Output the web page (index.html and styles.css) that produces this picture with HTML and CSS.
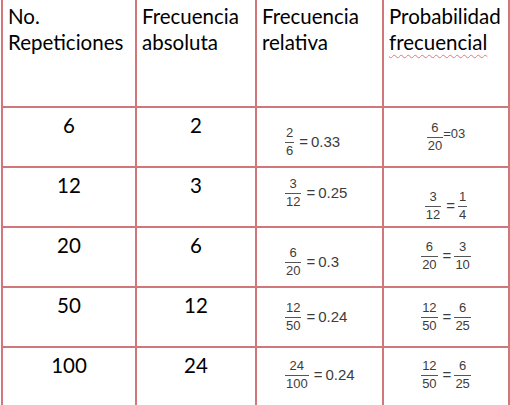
FILE: index.html
```html
<!DOCTYPE html>
<html lang="es">
<head>
    <meta charset="UTF-8" />
    <title>Frecuencias</title>
    <link rel="stylesheet" href="styles.css">
</head>
<body>
<table class="freq">
    <colgroup>
        <col class="c1"><col class="c2"><col class="c3"><col class="c4">
    </colgroup>
    <thead>
        <tr>
            <th>No.<br>Repeticiones</th>
            <th>Frecuencia<br>absoluta</th>
            <th>Frecuencia<br>relativa</th>
            <th>Probabilidad<br><span class="spell">frecuencial</span></th>
        </tr>
    </thead>
    <tbody>
        <tr>
            <td class="num">6</td>
            <td class="num">2</td>
            <td class="rel pt18"><div class="eq"><span class="frac"><span>2</span><span>6</span></span><span class="op">=</span><span>0.33</span></div></td>
            <td class="prob pt13"><div class="eq"><span class="frac"><span>6</span><span>20</span></span><span class="raised">=03</span></div></td>
        </tr>
        <tr>
            <td class="num">12</td>
            <td class="num">3</td>
            <td class="rel pt9"><div class="eq"><span class="frac"><span>3</span><span>12</span></span><span class="op">=</span><span>0.25</span></div></td>
            <td class="prob pt22"><div class="eq"><span class="frac"><span>3</span><span>12</span></span><span class="op">=</span><span class="frac"><span>1</span><span>4</span></span></div></td>
        </tr>
        <tr>
            <td class="num">20</td>
            <td class="num">6</td>
            <td class="rel pt18"><div class="eq"><span class="frac"><span>6</span><span>20</span></span><span class="op">=</span><span>0.3</span></div></td>
            <td class="prob pt12"><div class="eq"><span class="frac"><span>6</span><span>20</span></span><span class="op">=</span><span class="frac"><span>3</span><span>10</span></span></div></td>
        </tr>
        <tr>
            <td class="num">50</td>
            <td class="num">12</td>
            <td class="rel pt13"><div class="eq"><span class="frac"><span>12</span><span>50</span></span><span class="op">=</span><span>0.24</span></div></td>
            <td class="prob pt13"><div class="eq"><span class="frac"><span>12</span><span>50</span></span><span class="op">=</span><span class="frac"><span>6</span><span>25</span></span></div></td>
        </tr>
        <tr>
            <td class="num">100</td>
            <td class="num">24</td>
            <td class="rel pt11"><div class="eq"><span class="frac"><span>24</span><span>100</span></span><span class="op">=</span><span>0.24</span></div></td>
            <td class="prob pt11"><div class="eq"><span class="frac"><span>12</span><span>50</span></span><span class="op">=</span><span class="frac"><span>6</span><span>25</span></span></div></td>
        </tr>
    </tbody>
</table>
</body>
</html>
```

FILE: styles.css
```css
body {
    margin: 0;
    background-color: #fff;
    font-family: Lato, "Liberation Sans", sans-serif;
    color: #000;
    overflow: hidden;
}
.freq {
    border-collapse: collapse;
    table-layout: fixed;
    width: 509px;
    margin-left: 1px;
}
.c1 { width: 134px; }
.c2 { width: 120px; }
.c3 { width: 127px; }
.c4 { width: 126px; }
.freq th, .freq td {
    border: 2px solid #d27779;
    vertical-align: top;
    padding: 0;
    box-sizing: border-box;
}
.freq th {
    border-top: none;
    height: 107px;
    padding: 3px 0 0 5px;
    text-align: left;
    font-weight: 400;
    font-size: 20.5px;
    line-height: 26px;
}
.spell {
    text-decoration: underline wavy #e07a7a;
    text-decoration-thickness: 1px;
    text-underline-offset: 4px;
}
.freq tbody tr {
    height: 60px;
}
.num {
    padding-top: 4px !important;
    text-align: center;
    font-size: 20.5px;
    line-height: 26px;
}
.rel {
    padding-left: 28px !important;
}
.eq {
    display: flex;
    align-items: center;
    font-family: "Liberation Sans", sans-serif;
    font-size: 15px;
    line-height: 15px;
    color: #3c3c3c;
}
.prob .eq {
    justify-content: center;
}
.op {
    margin: 0 3px 0 5px;
}
.frac {
    display: inline-flex;
    flex-direction: column;
    align-items: stretch;
    text-align: center;
    font-size: 13px;
    line-height: 13px;
}
.frac span:first-child {
    padding: 0 1px 3px;
    border-bottom: 1px solid #555;
}
.frac span:last-child {
    padding: 1px 1px 0;
}
.raised {
    font-size: 13px;
    margin-bottom: 6px;
}
.pt9 { padding-top: 9px !important; }
.pt11 { padding-top: 11px !important; }
.pt12 { padding-top: 12px !important; }
.pt13 { padding-top: 13px !important; }
.pt18 { padding-top: 18px !important; }
.pt22 { padding-top: 22px !important; }
```
